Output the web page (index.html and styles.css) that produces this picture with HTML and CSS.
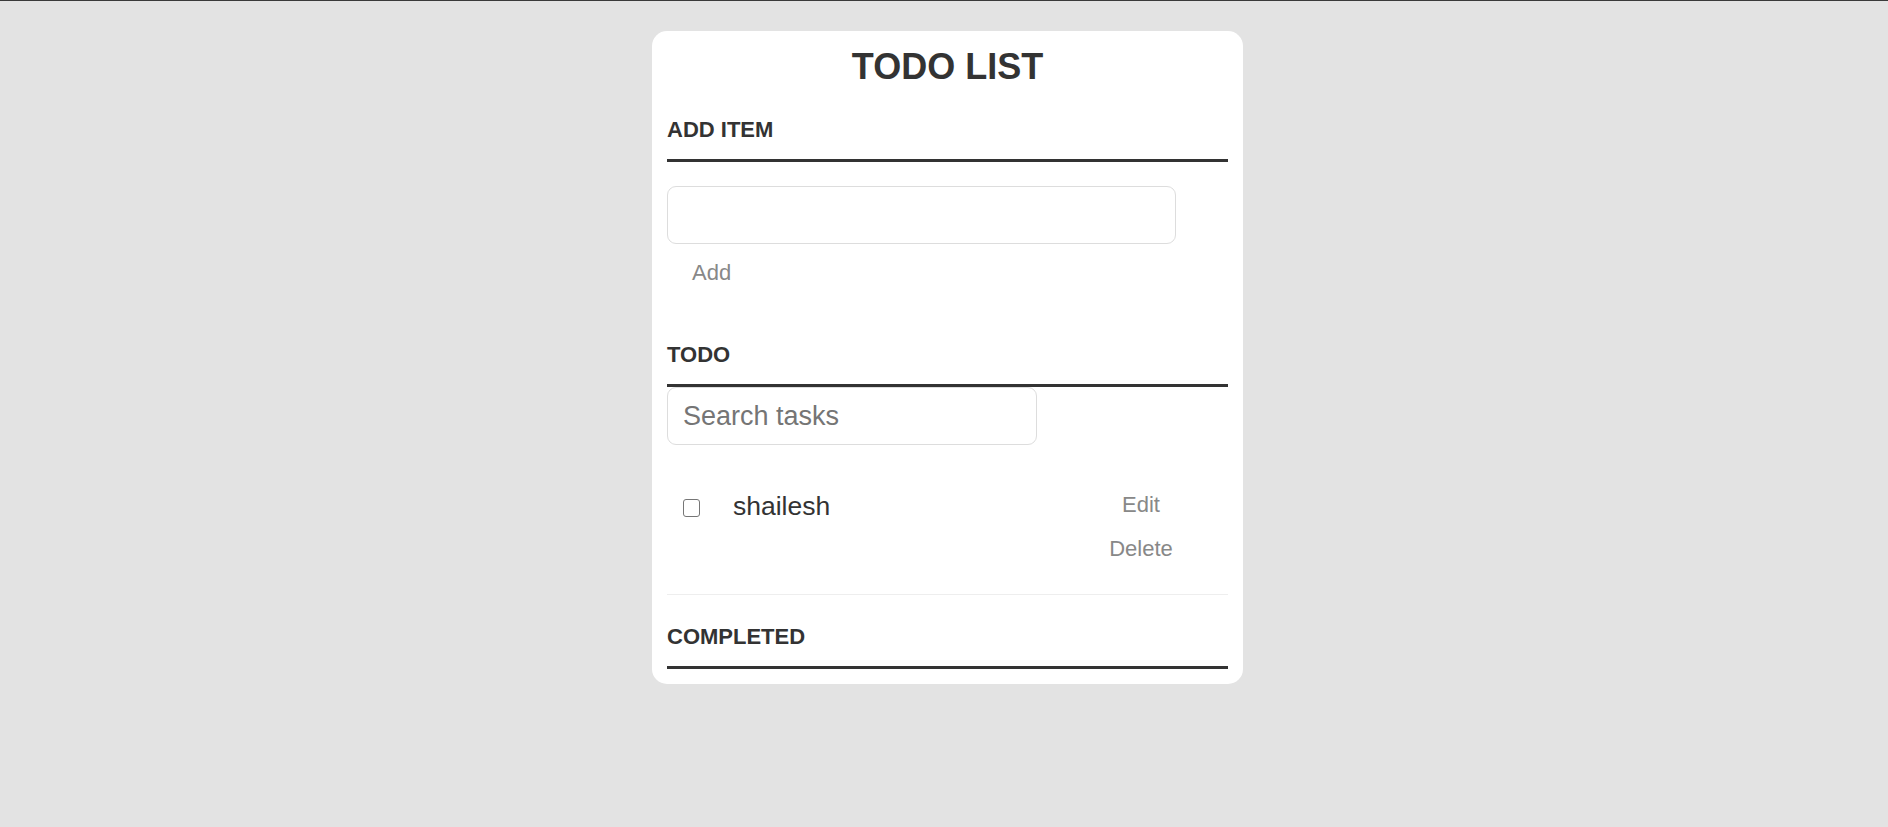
FILE: index.html
```html
<!DOCTYPE html>
<html lang="en">
<head>
<meta charset="utf-8">
<title>Todo List</title>
<link rel="stylesheet" href="styles.css">
</head>
<body>
  <main class="card">
    <h1 class="title">TODO LIST</h1>

    <section class="section">
      <h3 class="section-head">ADD ITEM</h3>
      <input class="new-input" type="text" aria-label="New task">
      <button class="text-btn add-btn" type="button">Add</button>
    </section>

    <section class="section section-todo">
      <h3 class="section-head">TODO</h3>
      <input class="search-input" type="text" placeholder="Search tasks">
      <ul class="task-list">
        <li class="task">
          <input class="task-check" type="checkbox" aria-label="Complete">
          <span class="task-label">shailesh</span>
          <div class="task-actions">
            <button class="text-btn" type="button">Edit</button>
            <button class="text-btn" type="button">Delete</button>
          </div>
        </li>
      </ul>
    </section>

    <section class="section section-completed">
      <h3 class="section-head">COMPLETED</h3>
    </section>
  </main>
</body>
</html>
```

FILE: styles.css
```css
html, body {
  margin: 0;
  padding: 0;
}

body {
  background: #e3e3e3;
  border-top: 1px solid #3a3a3a;
  padding-left: 7px;
  min-height: 826px;
  box-sizing: border-box;
  font-family: "Liberation Sans", Arial, sans-serif;
  color: #333;
}

.card {
  width: 591px;
  box-sizing: border-box;
  margin: 30px auto 0;
  background: #fff;
  border-radius: 15px;
  padding: 15px 15px 15px;
}

.title {
  margin: 0;
  font-size: 36px;
  line-height: 41px;
  font-weight: bold;
  text-align: center;
  color: #333;
}

.section {
  margin: 0;
}

.section-head {
  margin: 30px 0 0;
  padding-bottom: 17px;
  border-bottom: 3px solid #333;
  font-size: 22px;
  line-height: 25px;
  font-weight: bold;
  color: #333;
}

.new-input {
  display: block;
  box-sizing: border-box;
  width: 509px;
  height: 58px;
  margin-top: 24px;
  border: 1px solid #ddd;
  border-radius: 9px;
  padding: 0 15px;
  font-family: inherit;
  font-size: 26px;
  color: #333;
  outline: none;
}

.text-btn {
  display: block;
  background: none;
  border: 0;
  padding: 10px 10px 9px;
  font-family: inherit;
  font-size: 22px;
  line-height: 25px;
  color: #888;
  cursor: pointer;
}

.add-btn {
  margin-top: 6px;
  padding: 10px 25px;
}

.section-todo .section-head {
  margin-top: 47px;
}

.search-input {
  display: block;
  box-sizing: border-box;
  width: 370px;
  height: 58px;
  margin: 0;
  border: 1px solid #ddd;
  border-radius: 9px;
  padding: 0 15px;
  font-family: inherit;
  font-size: 27px;
  color: #333;
  outline: none;
}

.search-input::placeholder {
  color: #757575;
}

.task-list {
  list-style: none;
  margin: 0;
  padding: 0;
}

.task {
  display: flex;
  align-items: flex-start;
  padding: 37px 0 24px 16px;
  border-bottom: 1px solid #eee;
}

.task-check {
  appearance: none;
  -webkit-appearance: none;
  flex: none;
  width: 17px;
  height: 18px;
  margin: 17px 0 0;
  box-sizing: border-box;
  border: 1.5px solid #767676;
  border-radius: 3px;
  background: #fff;
}

.task-label {
  flex: 1;
  margin: 9px 0 0 33px;
  font-size: 26.5px;
  line-height: 30px;
  color: #333;
}

.task-actions {
  flex: none;
  width: 110px;
  margin-right: 32px;
  display: flex;
  flex-direction: column;
  align-items: center;
}

.section-completed .section-head {
  margin-top: 29px;
}
```
